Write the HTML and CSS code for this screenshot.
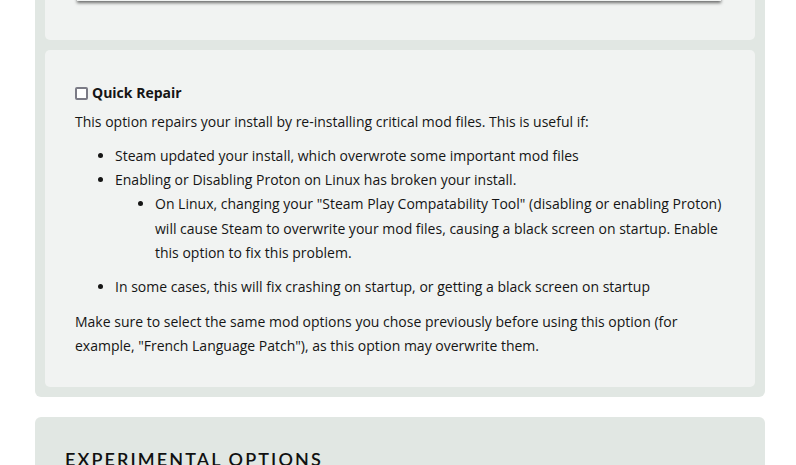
FILE: index.html
```html
<!DOCTYPE html>
<html>
<head>
<meta charset="utf-8">
<link rel="stylesheet" href="styles.css">
</head>
<body>
<section class="panel panel-top">
  <div class="card card-first">
    <div class="preview"></div>
  </div>
  <div class="card card-repair">
    <label class="check-label"><span class="check"></span> Quick Repair</label>
    <p class="para">This option repairs your install by re-installing critical mod files. This is useful if:</p>
    <ul class="list">
      <li>Steam updated your install, which overwrote some important mod files</li>
      <li>Enabling or Disabling Proton on Linux has broken your install.
        <ul class="sublist">
          <li>On Linux, changing your "Steam Play Compatability Tool" (disabling or enabling Proton) will cause Steam to overwrite your mod files, causing a black screen on startup. Enable this option to fix this problem.</li>
        </ul>
      </li>
      <li>In some cases, this will fix crashing on startup, or getting a black screen on startup</li>
    </ul>
    <p class="para para-last">Make sure to select the same mod options you chose previously before using this option (for example, "French Language Patch"), as this option may overwrite them.</p>
  </div>
</section>
<section class="panel panel-exp">
  <h2 class="heading">EXPERIMENTAL OPTIONS</h2>
</section>
</body>
</html>
```
FILE: styles.css
```css
html, body {
  margin: 0;
  padding: 0;
  background: #ffffff;
}
body {
  font-family: "Open Sans", "Noto Sans", sans-serif;
  font-size: 14px;
  line-height: 24px;
  color: #151515;
}
.panel {
  background: #e1e7e3;
  margin: 0 31px 0 35px;
  border-radius: 6px;
  padding: 10px;
}
.panel-top {
  margin-top: -70px;
  border-radius: 0 0 6px 6px;
}
.card {
  background: #f1f3f2;
  border-radius: 5px;
}
.card-first {
  padding: 0 34px 39px 32px;
  border-radius: 0 0 5px 5px;
}
.preview {
  height: 61px;
  background: #f1f3f2;
  box-shadow: 0 2px 3px rgba(0, 0, 0, 0.55);
}
.card-repair {
  margin-top: 10px;
  padding: 31px 30px 29px 30px;
}
.check-label {
  display: flex;
  align-items: center;
  font-weight: 700;
  line-height: 24px;
  gap: 4px;
}
.check {
  box-sizing: border-box;
  width: 13px;
  height: 13px;
  border: 2px solid #7b7b86;
  border-radius: 2px;
  background: #ffffff;
}
.para {
  margin: 5px 0 0 0;
}
.list {
  margin: 10px 0 0 0;
  padding-left: 40px;
}
.sublist {
  margin: 0 0 9px 0;
  padding-left: 40px;
  list-style: disc;
  line-height: 24.5px;
}
.para-last {
  margin-top: 11px;
}
.panel-exp {
  margin-top: 20px;
  padding: 30px 30px 20px 30px;
}
.heading {
  margin: 0;
  font-family: "Lato", "Noto Sans", sans-serif;
  font-weight: 600;
  font-size: 18px;
  letter-spacing: 2.1px;
  color: #111;
  padding-top: 0;
}
```
